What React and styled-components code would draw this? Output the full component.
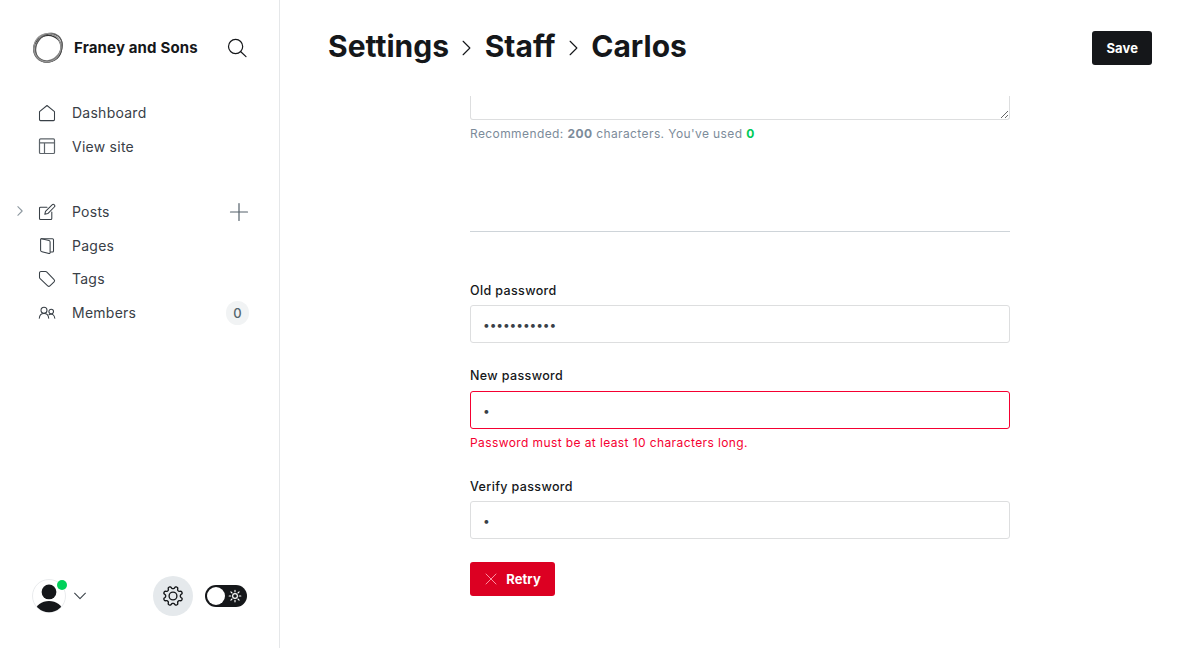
import React from "react";
import styled, { createGlobalStyle } from "styled-components";

const GlobalStyle = createGlobalStyle`
  *, *::before, *::after { box-sizing: border-box; }
  html, body { margin: 0; padding: 0; height: 100%; overflow: hidden; background: #fff; }
  body { font-family: Inter, "Liberation Sans", sans-serif; font-size: 15px; color: #15171a; }
  svg { display: block; flex: none; }
`;

const Shell = styled.div`
  display: flex;
  width: 100%;
  height: 648px;
`;

const Sidebar = styled.nav`
  display: flex;
  flex-direction: column;
  flex: 0 0 280px;
  border-right: 1px solid #e5e7e9;
`;

const SiteHeader = styled.header`
  display: flex;
  align-items: center;
  height: 32px;
  margin: 32px 32px 0;
`;

const SiteName = styled.div`
  flex: 1;
  margin-left: 10px;
  font-size: 15px;
  font-weight: 700;
  line-height: 20px;
  letter-spacing: 0.15px;
`;

const MenuGroup = styled.ul`
  list-style: none;
  margin: ${(p) => p.$top}px 0 0;
  padding: 0;
`;

const MenuItem = styled.li`
  display: flex;
  align-items: center;
  height: 33.6px;
  padding-right: 30px;
  color: #394047;
`;

const Expander = styled.span`
  display: flex;
  align-items: center;
  justify-content: center;
  width: 38px;
  height: 18px;
  padding: 0 0 1px 2px;
`;

const MenuLabel = styled.span`
  flex: 1;
  margin-left: 16px;
  font-size: 14px;
  line-height: 20px;
  letter-spacing: 0.25px;
`;

const CountBadge = styled.span`
  display: flex;
  align-items: center;
  justify-content: center;
  width: 23px;
  height: 24px;
  border-radius: 12px;
  background: #f1f3f4;
  color: #54666d;
  font-size: 13px;
  font-weight: 500;
`;

const SidebarFooter = styled.footer`
  display: flex;
  align-items: center;
  height: 40px;
  margin: auto 32px 32px;
`;

const AvatarBox = styled.div`
  position: relative;
  width: 34px;
  height: 34px;
`;

const OnlineDot = styled.span`
  position: absolute;
  top: 1px;
  right: -1px;
  width: 10px;
  height: 10px;
  border-radius: 50%;
  background: #00d15a;
`;

const ChevronSlot = styled.span`
  flex: 1;
  padding-left: 8px;
`;

const GearButton = styled.span`
  display: flex;
  align-items: center;
  justify-content: center;
  width: 40px;
  height: 40px;
  border-radius: 50%;
  background: #e5e9ec;
`;

const ThemeSwitch = styled.span`
  display: flex;
  align-items: center;
  justify-content: space-between;
  width: 42px;
  height: 22px;
  margin-left: 12px;
  padding: 0 5px 0 2px;
  border-radius: 11px;
  background: #15171a;
`;

const SwitchKnob = styled.span`
  width: 18px;
  height: 18px;
  border-radius: 50%;
  background: #fff;
`;

const Main = styled.main`
  display: flex;
  flex-direction: column;
  flex: 1;
  min-width: 0;
`;

const PageHeader = styled.header`
  display: flex;
  align-items: center;
  justify-content: space-between;
  height: 96px;
  padding: 0 48px;
`;

const Breadcrumb = styled.h1`
  display: flex;
  align-items: center;
  margin: -4px 0 0;
  font-size: 30px;
  font-weight: 700;
  line-height: 40px;
  letter-spacing: 0;
`;

const Crumb = styled.span`
  white-space: nowrap;
`;

const CrumbArrow = styled.span`
  padding: 4px 13.4px 0 13.3px;
`;

const Button = styled.button`
  display: flex;
  align-items: center;
  height: 34px;
  padding: 0 14px;
  border: 0;
  border-radius: 3px;
  background: ${(p) => p.$color};
  color: #fff;
  font: 700 13px/34px Inter, "Liberation Sans", sans-serif;
  letter-spacing: 0.1px;
`;

const ScrollArea = styled.section`
  flex: 1;
  overflow: hidden;
`;

const Form = styled.form`
  display: flex;
  flex-direction: column;
  align-items: flex-start;
  width: 540px;
  margin: 0 auto;
`;

const BioInput = styled.textarea`
  display: block;
  width: 540px;
  height: 24px;
  border: 1px solid #dddedf;
  border-top: 0;
  border-radius: 0 0 3px 3px;
  outline: none;
  resize: vertical;
`;

const Hint = styled.p`
  margin: 4px 0 0;
  color: ${(p) => (p.$error ? "#f50031" : "#7c8b9a")};
  font-size: 12px;
  line-height: 20px;
  letter-spacing: 0.4px;
`;

const HintStrong = styled.strong`
  font-weight: 700;
  color: ${(p) => (p.$good ? "#00ca58" : "inherit")};
`;

const Divider = styled.hr`
  width: 100%;
  height: 1px;
  margin: 87px 0 49px;
  border: 0;
  background: #ced4d9;
`;

const Field = styled.div`
  display: flex;
  flex-direction: column;
  width: 100%;
  margin-bottom: ${(p) => p.$gap}px;
`;

const Label = styled.label`
  margin-bottom: ${(p) => p.$gap}px;
  font-size: 12.5px;
  font-weight: 500;
  line-height: 20px;
  letter-spacing: 0.37px;
`;

const PasswordInput = styled.input`
  height: 38px;
  padding: 0 12px;
  border: 1px solid ${(p) => (p.$error ? "#f50031" : "#dddedf")};
  border-radius: 3px;
  outline: none;
  background: #fff;
  color: #394047;
  font: 400 12px Inter, "Liberation Sans", sans-serif;
  letter-spacing: -0.1px;
`;

const RetryIcon = styled.span`
  margin: 0 9.5px 0 0.7px;
`;

const Icon = ({ w = 18, h = w, vb = `0 0 ${w} ${h}`, sw = 1.05, color = "#394047", children }) => (
  <svg width={w} height={h} viewBox={vb} fill="none" stroke={color} strokeWidth={sw} strokeLinecap="round" strokeLinejoin="round">
    {children}
  </svg>
);

const Logo = () => (
  <svg width="32" height="32" viewBox="0 0 32 32" fill="none">
    <ellipse cx="15.7" cy="16.8" rx="14" ry="13.2" stroke="#333" strokeWidth="1.2" transform="rotate(-20 15.7 16.8)" />
    <ellipse cx="16.6" cy="15" rx="14.8" ry="12.2" stroke="#888" strokeWidth="1.3" transform="rotate(-50 16.6 15)" />
    <ellipse cx="15.2" cy="16" rx="13.4" ry="14.4" stroke="#777" strokeWidth="1.2" transform="rotate(25 15.2 16)" />
    <ellipse cx="17" cy="15.6" rx="12.4" ry="14.6" stroke="#555" strokeWidth="1.1" transform="rotate(40 17 15.6)" />
    <ellipse cx="15.4" cy="15.6" rx="14.2" ry="13.4" stroke="#999" strokeWidth="1" transform="rotate(-75 15.4 15.6)" />
  </svg>
);

const SearchIcon = () => (
  <Icon w={20} color="#15171a" sw={1.2}>
    <circle cx="8.6" cy="8.5" r="7.1" />
    <path d="M13.8 13.7 19 18.6" />
  </Icon>
);
const HomeIcon = () => (
  <Icon><path d="M1.5 7.6 9 1.500l7.500 6.100v8a1 1 0 0 1-1 1h-13a1 1 0 0 1-1-1z" /></Icon>
);
const LayoutIcon = () => (
  <Icon color="#5d646a" sw={1.2}>
    <rect x="1.5" y="0.9" width="15" height="14.600" rx="1" />
    <path d="M1.500 4.900h15M6.500 4.900v10.600" />
  </Icon>
);
const PostsIcon = () => (
  <Icon>
    <path d="M9 4.200H2.500a1 1 0 0 0-1 1v10.300a1 1 0 0 0 1 1h10.300a1 1 0 0 0 1-1V9" />
    <path d="m6.800 11.300.7-3 6.600-6.500a1.500 1.500 0 0 1 2.200 2.200l-6.500 6.600z" />
  </Icon>
);
const PagesIcon = () => (
  <Icon>
    <path d="M3.200 1.700h11.300a1 1 0 0 1 1 1v11.200a1 1 0 0 1-1 1h-2" />
    <path d="M3.500 1.700 11 3.500c.7.2 1.100.7 1.100 1.400v10.700c0 .7-.4 1-1.100.8l-7-1.700c-.9-.2-1.400-.7-1.400-1.500V2.400c0-.5.4-.8.9-.7z" />
  </Icon>
);
const TagIcon = () => (
  <Icon>
    <path d="M1.500 3v4.300c0 .5.2 1 .6 1.300l7.600 7.200c.7.7 1.600.7 2.200.1l4.200-4.100c.6-.6.6-1.500 0-2.100L8.900 2.100c-.4-.4-.8-.6-1.300-.6H3A1.500 1.500 0 0 0 1.500 3z" />
  </Icon>
);
const MembersIcon = () => (
  <Icon>
    <circle cx="6" cy="6.300" r="3" />
    <path d="M1.300 14.300c.2-2.800 2-4.900 4.700-4.900s4.500 2.100 4.700 4.900" />
    <circle cx="13.200" cy="7.600" r="2.300" />
    <path d="M11 10.700c3-1.700 5.500.3 5.800 3.600" />
  </Icon>
);
const PlusIcon = () => (
  <Icon w={20} color="#54606a" sw={1.2}><path d="M10 1.500v17M1.500 10h17" /></Icon>
);
const ArrowRight = ({ w, h, color, sw }) => (
  <Icon w={w} h={h} vb="0 0 8 14" color={color} sw={sw}><path d="m1 1 6 6-6 6" /></Icon>
);
const ChevronDown = () => (
  <Icon w={12} h={8} color="#394047"><path d="m.6 1.200 5.400 5.400 5.400-5.400" /></Icon>
);

const gearPath = (() => {
  const points = [];
  for (let i = 0; i < 144; i += 1) {
    const a = (i / 144) * Math.PI * 2;
    const wave = Math.tanh(-1.8 * Math.cos(8 * a)) / Math.tanh(1.8);
    const r = 8.5 + 1.15 * wave;
    points.push(`${(11 + r * Math.cos(a)).toFixed(2)} ${(11 + r * Math.sin(a)).toFixed(2)}`);
  }
  return `M${points.join("L")}Z`;
})();

const GearIcon = () => (
  <Icon w={22} color="#15171a" sw={1.35}>
    <path d={gearPath} />
    <circle cx="11" cy="11" r="3.900" />
  </Icon>
);

const SunIcon = () => (
  <Icon w={14} color="#fff" sw={1.15}>
    <circle cx="7" cy="7" r="2.400" />
    <path d="M7 1.200v1.600M7 11.200v1.600M1.200 7h1.600M11.200 7h1.600M2.900 2.900l1.100 1.100M10 10l1.100 1.100M11.100 2.900 10 4M4 10l-1.100 1.100" />
  </Icon>
);

const Avatar = () => (
  <svg width="34" height="34" viewBox="0 0 34 34">
    <defs><clipPath id="avatar-clip"><circle cx="17" cy="17" r="16.200" /></clipPath></defs>
    <circle cx="17" cy="17" r="16.500" fill="#fff" stroke="#e9ebed" />
    <g clipPath="url(#avatar-clip)" fill="#15171a">
      <circle cx="17" cy="12.900" r="7.400" />
      <ellipse cx="17" cy="32" rx="13.500" ry="10" />
    </g>
  </svg>
);

export default function App() {
  return (
    <Shell>
      <GlobalStyle />
      <Sidebar>
        <SiteHeader>
          <Logo />
          <SiteName>Franey and Sons</SiteName>
          <SearchIcon />
        </SiteHeader>
        <MenuGroup $top={32.4}>
          <MenuItem><Expander /><HomeIcon /><MenuLabel>Dashboard</MenuLabel></MenuItem>
          <MenuItem><Expander /><LayoutIcon /><MenuLabel>View site</MenuLabel></MenuItem>
        </MenuGroup>
        <MenuGroup $top={31.6}>
          <MenuItem>
            <Expander><ArrowRight w={6} h={10} color="#8c979f" sw={1.5} /></Expander>
            <PostsIcon /><MenuLabel>Posts</MenuLabel><PlusIcon />
          </MenuItem>
          <MenuItem><Expander /><PagesIcon /><MenuLabel>Pages</MenuLabel></MenuItem>
          <MenuItem><Expander /><TagIcon /><MenuLabel>Tags</MenuLabel></MenuItem>
          <MenuItem><Expander /><MembersIcon /><MenuLabel>Members</MenuLabel><CountBadge>0</CountBadge></MenuItem>
        </MenuGroup>
        <SidebarFooter>
          <AvatarBox><Avatar /><OnlineDot /></AvatarBox>
          <ChevronSlot><ChevronDown /></ChevronSlot>
          <GearButton><GearIcon /></GearButton>
          <ThemeSwitch><SwitchKnob /><SunIcon /></ThemeSwitch>
        </SidebarFooter>
      </Sidebar>
      <Main>
        <PageHeader>
          <Breadcrumb>
            <Crumb>Settings</Crumb>
            <CrumbArrow><ArrowRight w={9} h={16} color="#15171a" sw={1} /></CrumbArrow>
            <Crumb>Staff</Crumb>
            <CrumbArrow><ArrowRight w={9} h={16} color="#15171a" sw={1} /></CrumbArrow>
            <Crumb>Carlos</Crumb>
          </Breadcrumb>
          <Button type="button" $color="#15171a">Save</Button>
        </PageHeader>
        <ScrollArea>
          <Form>
            <BioInput aria-label="Bio" />
            <Hint>
              Recommended: <HintStrong>200</HintStrong> characters. You've used <HintStrong $good>0</HintStrong>
            </Hint>
            <Divider />
            <Field $gap={23}>
              <Label htmlFor="old" $gap={4}>Old password</Label>
              <PasswordInput id="old" type="password" defaultValue="hunter12345" />
            </Field>
            <Field $gap={24}>
              <Label htmlFor="new" $gap={5}>New password</Label>
              <PasswordInput id="new" type="password" defaultValue="a" $error />
              <Hint $error>Password must be at least 10 characters long.</Hint>
            </Field>
            <Field $gap={23}>
              <Label htmlFor="verify" $gap={4}>Verify password</Label>
              <PasswordInput id="verify" type="password" defaultValue="a" />
            </Field>
            <Button type="button" $color="#dc0022">
              <RetryIcon><Icon w={12} color="#ffa0b0" sw={0.9}><path d="m1 1 10 10M11 1 1 11" /></Icon></RetryIcon>
              Retry
            </Button>
          </Form>
        </ScrollArea>
      </Main>
    </Shell>
  );
}
